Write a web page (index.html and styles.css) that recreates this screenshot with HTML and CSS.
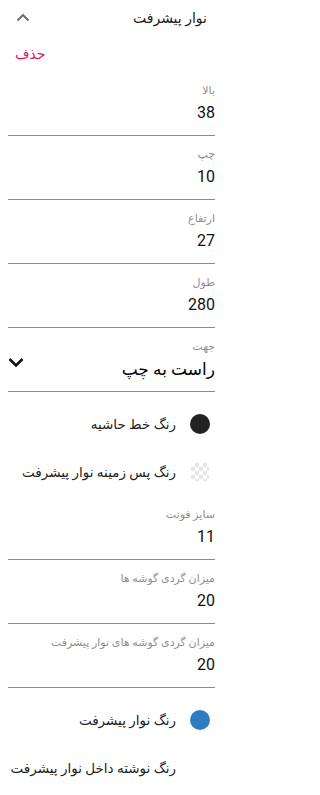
FILE: index.html
```html
<!DOCTYPE html>
<html lang="fa">
<head>
<meta charset="utf-8">
<link rel="stylesheet" href="styles.css">
</head>
<body>
<div class="panel" dir="rtl">
  <div class="header">
    <span class="title">نوار پیشرفت</span>
    <svg class="chev-up" width="14" height="9" viewBox="0 0 14 9"><path d="M1.5 7.5 L7 2 L12.5 7.5" fill="none" stroke="#666" stroke-width="1.8"/></svg>
  </div>
  <div class="del-row"><span class="del">حذف</span></div>

  <div class="field"><div class="label">بالا</div><div class="value">38</div></div>
  <div class="field"><div class="label">چپ</div><div class="value">10</div></div>
  <div class="field"><div class="label">ارتفاع</div><div class="value">27</div></div>
  <div class="field"><div class="label">طول</div><div class="value">280</div></div>
  <div class="field select"><div class="label">جهت</div>
    <div class="sel-row"><span class="sel-value">راست به چپ</span>
      <svg class="chev-down" width="16" height="11" viewBox="0 0 16 11"><path d="M1.5 2 L8 8.5 L14.5 2" fill="none" stroke="#111" stroke-width="2.6"/></svg>
    </div>
  </div>

  <div class="colors">
    <div class="color-row"><span class="swatch black"></span><span class="ctext">رنگ خط حاشیه</span></div>
    <div class="color-row"><span class="swatch checker"></span><span class="ctext">رنگ پس زمینه نوار پیشرفت</span></div>
  </div>

  <div class="field"><div class="label">سایز فونت</div><div class="value">11</div></div>
  <div class="field"><div class="label">میزان گردی گوشه ها</div><div class="value">20</div></div>
  <div class="field"><div class="label">میزان گردی گوشه های نوار پیشرفت</div><div class="value">20</div></div>

  <div class="colors">
    <div class="color-row"><span class="swatch blue"></span><span class="ctext">رنگ نوار پیشرفت</span></div>
    <div class="color-row"><span class="swatch white"></span><span class="ctext">رنگ نوشته داخل نوار پیشرفت</span></div>
  </div>
</div>
</body>
</html>
```

FILE: styles.css
```css
html, body {
  margin: 0;
  padding: 0;
  background: #fff;
}
body {
  font-family: Roboto, "Noto Sans", "DejaVu Sans", sans-serif;
  color: #212121;
}
.panel {
  width: 223px;
  direction: rtl;
}
.header {
  height: 36px;
  display: flex;
  align-items: center;
  justify-content: space-between;
  padding: 0 16px 0 16px;
}
.title {
  font-size: 14px;
  color: #222;
}
.chev-up {
  display: block;
  margin-top: -2px;
}
.del-row {
  height: 36px;
  display: flex;
  align-items: center;
  justify-content: flex-end;
  padding-left: 15px;
}
.del {
  font-size: 14px;
  color: #d81b60;
}
.field {
  margin: 0 8px;
  padding: 12px 0 11px;
  border-bottom: 1px solid #8c8c8c;
}
.label {
  font-size: 11px;
  line-height: 14px;
  height: 14px;
  color: #8f8f8f;
}
.value {
  margin-top: 4px;
  font-size: 16px;
  line-height: 22px;
  color: #111;
}
.sel-row {
  margin-top: 4px;
  height: 22px;
  display: flex;
  align-items: center;
  justify-content: space-between;
}
.sel-value {
  font-size: 17px;
  line-height: 22px;
  color: #000;
}
.chev-down {
  display: block;
  margin-top: -13px;
}
.colors {
  padding-top: 8px;
}
.color-row {
  height: 48px;
  display: flex;
  align-items: center;
  gap: 14px;
  padding-right: 13px;
}
.swatch {
  width: 20px;
  height: 20px;
  border-radius: 50%;
  flex: none;
}
.black { background: #222; }
.blue { background: #2f7bc2; }
.white { background: #fff; }
.checker {
  border-radius: 3px;
  width: 18px;
  height: 18px;
  margin: 0 1px;
  background-color: #fff;
  background-image: conic-gradient(#e6e6e6 25%, #fff 0 50%, #e6e6e6 0 75%, #fff 0);
  background-size: 8px 8px;
}
.ctext {
  font-size: 13.5px;
  color: #222;
}
```
